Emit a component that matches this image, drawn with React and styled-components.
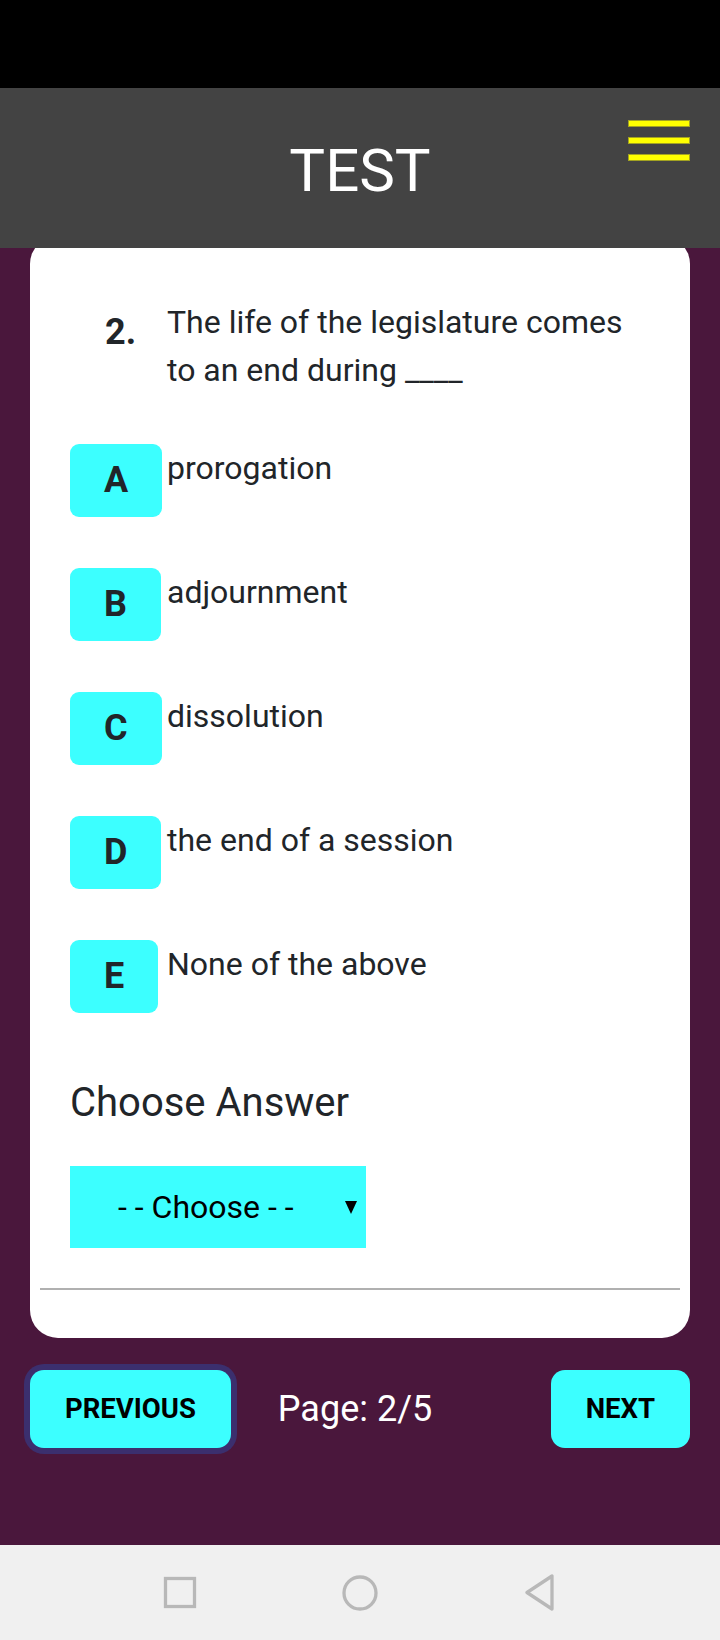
import React from "react";
import styled, { createGlobalStyle } from "styled-components";

const GlobalStyle = createGlobalStyle`
  html, body { margin: 0; padding: 0; }
  body { font-family: Roboto, "Noto Sans", Arial, sans-serif; background: #4a173c; }
  * { box-sizing: border-box; }
`;

const Page = styled.div`
  width: 720px;
  min-height: 1640px;
  display: flex;
  flex-direction: column;
  background: #4a173c;
`;

const StatusBar = styled.div`
  height: 88px;
  background: #000;
`;

const Header = styled.header`
  position: relative;
  z-index: 1;
  height: 160px;
  background: #434343;
  display: grid;
  grid-template-columns: 1fr auto 1fr;
  padding: 0 30px;
`;

const Title = styled.h1`
  grid-column: 2;
  align-self: center;
  margin: 0;
  padding-top: 6px;
  font-size: 60px;
  font-weight: 400;
  color: #fff;
  line-height: 1;
`;

const MenuButton = styled.button`
  grid-column: 3;
  justify-self: end;
  align-self: start;
  margin-top: 32px;
  padding: 0;
  width: 62px;
  border: none;
  background: transparent;
  display: flex;
  flex-direction: column;
  gap: 10px;
`;

const MenuBar = styled.span`
  display: block;
  height: 7px;
  background: #ffff00;
  border: 1px solid #a3a321;
`;

const Main = styled.main`
  flex: 1;
  display: flex;
  flex-direction: column;
`;

const Card = styled.section`
  margin: -12px 30px 0;
  background: #fff;
  border-radius: 28px;
  padding: 62px 10px 48px;
`;

const Content = styled.div`
  padding: 0 30px;
  color: #212529;
`;

const QuestionRow = styled.div`
  display: flex;
  padding-left: 35px;
`;

const QNumber = styled.div`
  width: 62px;
  flex-shrink: 0;
  padding-top: 10px;
  font-size: 36px;
  font-weight: 700;
  line-height: 48px;
`;

const QText = styled.p`
  margin: 0;
  flex: 1;
  font-size: 32px;
  line-height: 48px;
`;

const Options = styled.div`
  margin-top: 50px;
  display: flex;
  flex-direction: column;
  gap: 51px;
`;

const OptionRow = styled.div`
  display: flex;
  align-items: flex-start;
`;

const LetterCol = styled.div`
  width: 97px;
  flex-shrink: 0;
`;

const LetterBox = styled.span`
  display: inline-block;
  padding: 10px 34px;
  background: #3cffff;
  border-radius: 9px;
  font-size: 36px;
  font-weight: 700;
  line-height: 53px;
`;

const OptionText = styled.span`
  font-size: 32px;
  line-height: 48px;
`;

const ChooseLabel = styled.h3`
  margin: 66px 0 0;
  font-size: 40px;
  font-weight: 400;
  line-height: 48px;
`;

const Select = styled.div`
  margin-top: 39px;
  width: 296px;
  height: 82px;
  background: #3cffff;
  display: flex;
  align-items: center;
  padding: 0 9px 0 48px;
  font-size: 32px;
  color: #000;
`;

const Caret = styled.svg`
  margin-left: auto;
  width: 12px;
  height: 13px;
`;

const Divider = styled.hr`
  margin: 40px 0 0;
  border: none;
  height: 2px;
  background: #b0b0b0;
`;

const Footer = styled.div`
  margin-top: 32px;
  padding: 0 30px;
  display: flex;
  align-items: center;
`;

const NavButton = styled.button`
  padding: 23px 35px;
  border: none;
  border-radius: 14px;
  background: #3cffff;
  color: #000;
  font-family: Roboto, Arial, sans-serif;
  font-size: 27.5px;
  font-weight: 700;
  line-height: 32px;
  box-shadow: ${(p) => (p.$focused ? "0 0 0 6px #3b2f6e" : "none")};
  margin-left: ${(p) => (p.$right ? "auto" : "0")};
`;

const PageInfo = styled.span`
  margin-left: 47px;
  font-size: 36px;
  color: #fff;
`;

const SystemNav = styled.nav`
  height: 95px;
  background: #f0f0f0;
  display: flex;
  justify-content: center;
  align-items: center;
`;

const NavSlot = styled.div`
  width: 180px;
  display: flex;
  justify-content: center;
  align-items: center;
`;

const options = [
  ["A", "prorogation"],
  ["B", "adjournment"],
  ["C", "dissolution"],
  ["D", "the end of a session"],
  ["E", "None of the above"],
];

export default function App() {
  return (
    <>
      <GlobalStyle />
      <Page>
        <StatusBar />
        <Header>
          <Title>TEST</Title>
          <MenuButton aria-label="menu">
            <MenuBar />
            <MenuBar />
            <MenuBar />
          </MenuButton>
        </Header>
        <Main>
          <Card>
            <Content>
              <QuestionRow>
                <QNumber>2.</QNumber>
                <QText>The life of the legislature comes to an end during ____</QText>
              </QuestionRow>
              <Options>
                {options.map(([l, t]) => (
                  <OptionRow key={l}>
                    <LetterCol>
                      <LetterBox>{l}</LetterBox>
                    </LetterCol>
                    <OptionText>{t}</OptionText>
                  </OptionRow>
                ))}
              </Options>
              <ChooseLabel>Choose Answer</ChooseLabel>
              <Select>
                <span>- - Choose - -</span>
                <Caret viewBox="0 0 12 13">
                  <polygon points="0,0 12,0 6,13" fill="#000" />
                </Caret>
              </Select>
            </Content>
            <Divider />
          </Card>
          <Footer>
            <NavButton $focused>PREVIOUS</NavButton>
            <PageInfo>Page: 2/5</PageInfo>
            <NavButton $right>NEXT</NavButton>
          </Footer>
        </Main>
        <SystemNav>
          <NavSlot>
            <svg width="34" height="34" viewBox="0 0 34 34">
              <rect x="2.5" y="2.5" width="29" height="28" fill="none" stroke="#b8b8b8" strokeWidth="3.3" />
            </svg>
          </NavSlot>
          <NavSlot>
            <svg width="38" height="38" viewBox="0 0 38 38">
              <circle cx="19" cy="19" r="16" fill="none" stroke="#b8b8b8" strokeWidth="3.3" />
            </svg>
          </NavSlot>
          <NavSlot>
            <svg width="34" height="38" viewBox="0 0 34 38">
              <polygon points="29,2 29,35 4,18.5" fill="none" stroke="#b8b8b8" strokeWidth="3.3" strokeLinejoin="round" />
            </svg>
          </NavSlot>
        </SystemNav>
      </Page>
    </>
  );
}
